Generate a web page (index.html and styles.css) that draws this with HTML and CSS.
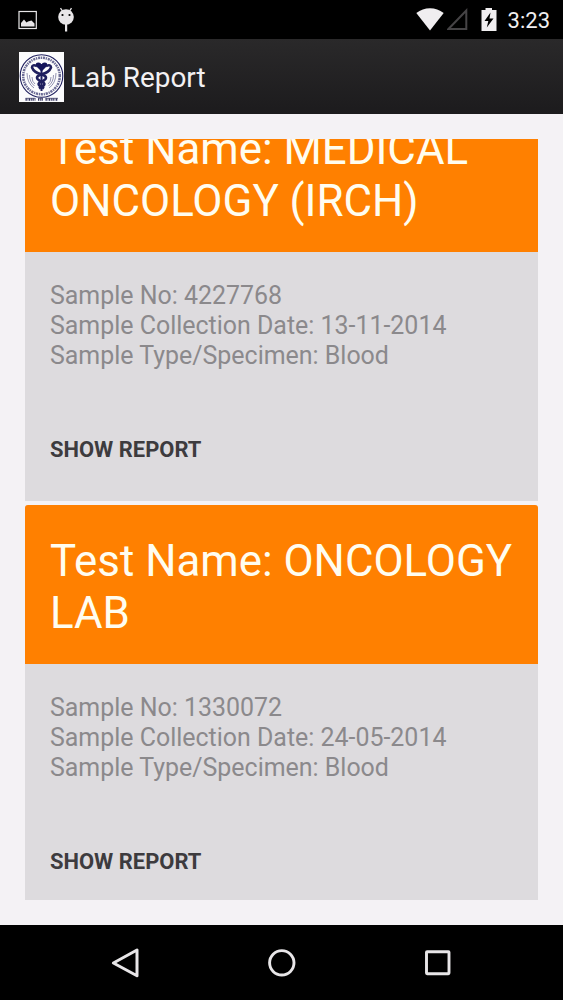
FILE: index.html
```html
<!DOCTYPE html>
<html lang="en">
  <head>
    <meta charset="UTF-8" />
    <meta name="viewport" content="width=device-width, initial-scale=1.0" />
    <title>Lab Report</title>
    <link rel="stylesheet" href="styles.css">
  </head>
  <body>
    <div class="status-bar">
      <svg class="icon-picture" width="20" height="20" viewBox="0 0 20 20">
        <rect x="1" y="1.500" width="17.300" height="17" fill="none" stroke="#e8e6e8" stroke-width="1.200" />
        <path d="M3 16.500V13l3-3.500 2.500 3 1.500-1 3.500-1 3 3v3z" fill="#e8e6e8" />
      </svg>
      <svg class="icon-android" width="18" height="25" viewBox="0 0 18 25">
        <path d="M3.500 1.200l2 3M14.500 1.200l-2 3" stroke="#e8e6e8" stroke-width="1.300" />
        <circle cx="9" cy="10" r="7.800" fill="#e8e6e8" />
        <rect x="8" y="17" width="2.200" height="7.500" fill="#e8e6e8" />
        <circle cx="5.500" cy="8" r="1.100" fill="#000" />
        <circle cx="12.500" cy="8" r="1.100" fill="#000" />
      </svg>
      <div class="status-right">
        <svg width="28" height="23" viewBox="0 0 28 23">
          <path d="M14 22.500L.3 5Q6.500.3 14 .3T27.700 5z" fill="#f0eef0" />
        </svg>
        <svg class="icon-signal" width="22" height="23" viewBox="0 0 22 23">
          <path d="M19.300 2.500V21H1.500z" fill="none" stroke="#464446" stroke-width="2" />
        </svg>
        <svg class="icon-battery" width="16" height="23" viewBox="0 0 16 23">
          <path d="M4.500 0h6.500v2H15.500v21H.5V2h4z" fill="#f0eef0" />
          <path d="M9.500 4.500L3.500 13h3.800l-1.500 6.500L12.500 10.500H8.500z" fill="#000" />
        </svg>
        <span class="clock">3:23</span>
      </div>
    </div>

    <div class="action-bar">
      <svg class="logo" width="45" height="50" viewBox="0 0 45 50">
        <rect width="45" height="50" fill="#fcfcfd" />
        <g fill="none" stroke="#20205f">
          <circle cx="22.500" cy="24" r="21.300" stroke-width="1.100" />
          <circle cx="22.500" cy="24" r="18.300" stroke-width="2.500" stroke-dasharray="1.300 .8 2.200 .7" opacity=".65" />
          <!-- laurel lines -->
          <path d="M8 21q0 10 7 15M10.500 23q0 7 5 11M13 25q0 5 3 7M37 21q0 10-7 15M34.500 23q0 7-5 11M32 25q0 5-3 7" stroke-width=".8" opacity=".6" />
          <!-- snakes around the staff -->
          <path d="M22.500 12v27" stroke-width="2" />
          <path d="M18 14q-5-2-5 1.500 2 5 8.500 6.500 7 2 5 5-1.500 2-6 3.500-2.500 2 1.500 4l3 2" stroke-width="2.600" />
          <path d="M27 14q5-2 5 1.500-2 5-8.500 6.500-7 2-5 5 1.500 2 6 3.500 2.500 2-1.500 4l-3 2" stroke-width="2.600" />
        </g>
        <path d="M22.500 19.500l-5-5q-2-4 2-4 2.200 0 3 2 .8-2 3-2 4 0 2 4z" fill="#14145a" />
        <path d="M6.500 47.500h10M19 47.500h5M26.500 47.500H39" stroke="#34345f" stroke-width="2.400" stroke-dasharray="1.300 .8 .8 .6" />
        <path d="M6.500 46.300h10M19 46.300h5M26.500 46.300H39" stroke="#34345f" stroke-width=".7" />
      </svg>
      <h1>Lab Report</h1>
    </div>

    <div class="content">
      <div class="list">
        <div class="card">
          <h2>Test Name: MEDICAL ONCOLOGY (IRCH)</h2>
          <div class="card-body">
            <p>Sample No: 4227768</p>
            <p>Sample Collection Date: 13-11-2014</p>
            <p>Sample Type/Specimen: Blood</p>
            <button type="button">SHOW REPORT</button>
          </div>
        </div>
        <div class="card">
          <h2>Test Name: ONCOLOGY LAB</h2>
          <div class="card-body">
            <p>Sample No: 1330072</p>
            <p>Sample Collection Date: 24-05-2014</p>
            <p>Sample Type/Specimen: Blood</p>
            <button type="button">SHOW REPORT</button>
          </div>
        </div>
      </div>
    </div>

    <div class="nav-bar">
      <svg width="32" height="32" viewBox="0 0 32 32">
        <path d="M28 3v25.800L4.400 16z" fill="none" stroke="#e8e6e8" stroke-width="3" stroke-linejoin="round" />
      </svg>
      <svg width="32" height="32" viewBox="0 0 32 32">
        <circle cx="15.800" cy="15.800" r="12.200" fill="none" stroke="#e8e6e8" stroke-width="2.900" />
      </svg>
      <svg width="32" height="32" viewBox="0 0 32 32">
        <rect x="4.500" y="4.700" width="22.500" height="22" rx=".6" fill="none" stroke="#e8e6e8" stroke-width="2.900" />
      </svg>
    </div>
  </body>
</html>
```
FILE: styles.css
```css
* {
  box-sizing: border-box;
}
body {
  font-family: Roboto, "Noto Sans", sans-serif;
  margin: 0;
  height: 1000px;
  background-color: #f4f2f5;
  display: flex;
  flex-direction: column;
  overflow: hidden;
}
svg {
  display: block;
  flex: none;
}
h1,
h2,
p {
  margin: 0;
  font-weight: normal;
}

/* status bar */
.status-bar {
  height: 39px;
  background-color: #000;
  display: flex;
  align-items: center;
  padding: 0 13px 0 18px;
}
.icon-android {
  margin-left: 19px;
}
.status-right {
  margin-left: auto;
  display: flex;
  align-items: center;
}
.icon-signal {
  margin-left: 3px;
}
.icon-battery {
  margin-left: 12px;
}
.clock {
  margin-left: 11px;
  padding-top: 2px;
  color: #f0eef0;
  font-size: 22px;
  line-height: 26px;
}

/* action bar */
.action-bar {
  height: 75px;
  background: linear-gradient(#2a292a, #1c1b1d);
  display: flex;
  align-items: center;
  padding-left: 19px;
}
.action-bar h1 {
  margin-left: 6px;
  padding-top: 2px;
  color: #f3f1f3;
  font-size: 27.9px;
  line-height: 34px;
}

/* report list */
.content {
  height: 811px;
  padding: 25px;
}
.list {
  height: 761px;
  overflow: hidden;
}
.card {
  height: 408px;
  margin-bottom: 4px;
  border-radius: 3px 3px 0 0;
  overflow: hidden;
  background-color: #dddbde;
}
/* scrolled part way past the first card */
.card:first-child {
  margin-top: -46.4px;
}
.card h2 {
  height: 159.5px;
  padding: 30px 20px 0 25px;
  background-color: #ff8000;
  color: #fffdf0;
  font-size: 43.85px;
  line-height: 52px;
}
.card-body {
  padding: 28.6px 25px 0;
}
.card-body p {
  color: #8b898c;
  font-size: 24.95px;
  line-height: 30px;
}
.card-body button {
  display: block;
  margin-top: 66.4px;
  padding: 0;
  border: none;
  background: none;
  color: #3d3b3e;
  font-family: inherit;
  font-size: 21.95px;
  font-weight: bold;
  line-height: 26px;
}

/* navigation bar */
.nav-bar {
  height: 75px;
  background-color: #000;
  display: flex;
  justify-content: center;
  align-items: center;
  gap: 124.5px;
}
```
